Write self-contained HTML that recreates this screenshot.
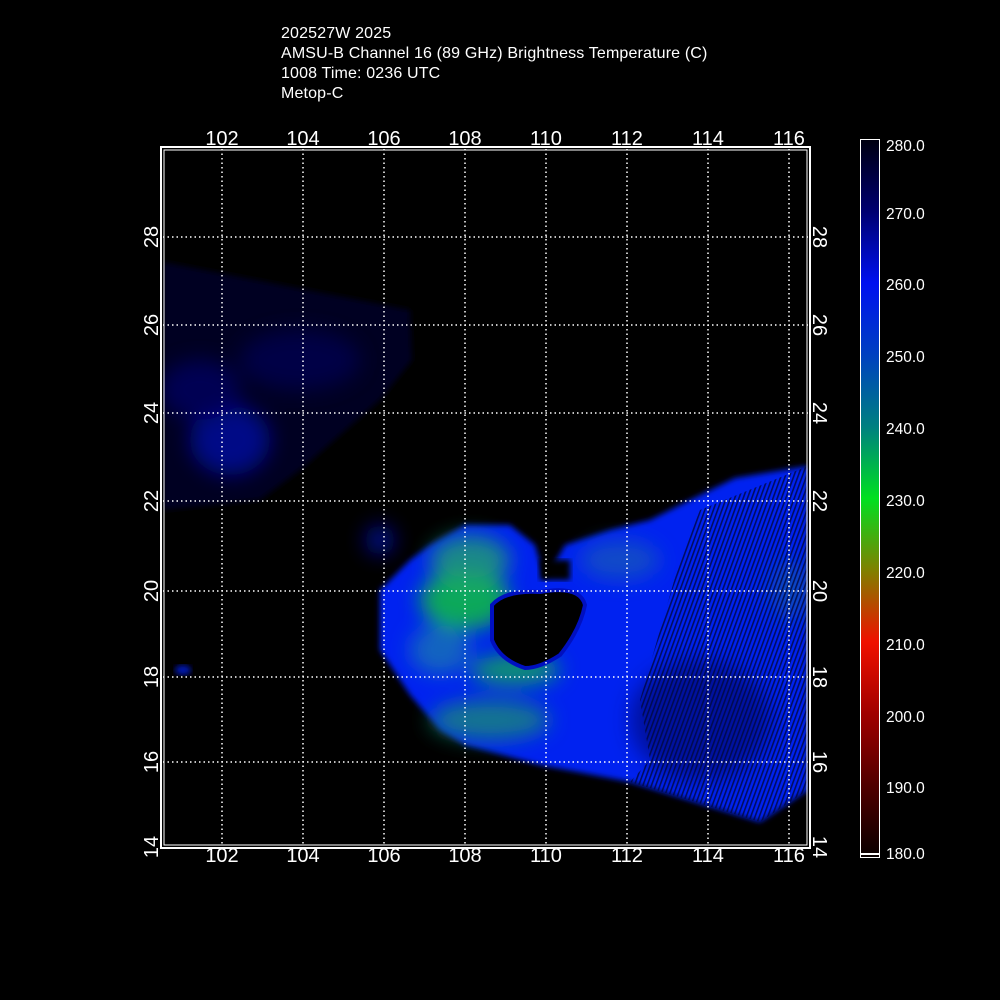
<!DOCTYPE html>
<html><head><style>
body{margin:0;background:#000;width:1000px;height:1000px;overflow:hidden;font-family:"Liberation Sans",sans-serif;color:#fff}
.t{position:absolute;left:281px;font-size:16px;line-height:20px;letter-spacing:0.15px}
</style></head><body>
<div class="t" style="top:24px">202527W 2025<br>AMSU-B Channel 16 (89 GHz) Brightness Temperature (C)<br>1008 Time: 0236 UTC<br>Metop-C</div>
<svg width="1000" height="1000" style="position:absolute;left:0;top:0">
<defs>
<filter id="b" x="-20%" y="-20%" width="140%" height="140%"><feGaussianBlur stdDeviation="10"/></filter>
<filter id="b2"><feGaussianBlur stdDeviation="3"/></filter>
<clipPath id="pc"><rect x="163" y="149" width="645" height="697"/></clipPath>
<linearGradient id="cb" x1="0" y1="0" x2="0" y2="1">
<stop offset="0" stop-color="#000010"/>
<stop offset="0.1" stop-color="#000070"/>
<stop offset="0.2" stop-color="#0010f0"/>
<stop offset="0.3" stop-color="#0040c0"/>
<stop offset="0.4" stop-color="#008080"/>
<stop offset="0.5" stop-color="#00e020"/>
<stop offset="0.6" stop-color="#808000"/>
<stop offset="0.7" stop-color="#f01000"/>
<stop offset="0.8" stop-color="#a00000"/>
<stop offset="0.9" stop-color="#500000"/>
<stop offset="1" stop-color="#080000"/>
</linearGradient>
<pattern id="st" width="4" height="4" patternUnits="userSpaceOnUse" patternTransform="rotate(20)"><rect width="1.6" height="4" fill="#000840"/></pattern>
</defs>
<g clip-path="url(#pc)">
<polygon points="163,262 410,310 412,360 380,400 300,470 260,500 163,510" fill="#000020" filter="url(#b2)"/>
<g filter="url(#b)" opacity="0.8">
<ellipse cx="230" cy="440" rx="40" ry="35" fill="#0010a0"/>
<ellipse cx="200" cy="390" rx="40" ry="30" fill="#000660"/>
<ellipse cx="300" cy="360" rx="60" ry="30" fill="#000450"/>
<ellipse cx="380" cy="540" rx="15" ry="15" fill="#0010a0"/>
</g>
<ellipse cx="183" cy="670" rx="8" ry="5" fill="#0016b0" filter="url(#b2)"/>
<polygon points="380,590 410,560 430,545 465,525 510,525 535,545 545,580 565,545 610,530 650,520 690,500 735,478 808,466 808,790 760,822 630,782 540,765 465,745 440,730 410,695 380,650" fill="#0420f0" filter="url(#b2)"/>
<g filter="url(#b)">
<ellipse cx="465" cy="600" rx="45" ry="30" fill="#10c040" opacity="0.85"/>
<ellipse cx="470" cy="560" rx="40" ry="25" fill="#20a070" opacity="0.8"/>
<ellipse cx="515" cy="670" rx="45" ry="15" fill="#10b050" opacity="0.8"/>
<ellipse cx="490" cy="720" rx="60" ry="20" fill="#1a9070" opacity="0.75"/>
<ellipse cx="620" cy="560" rx="40" ry="20" fill="#2070a0" opacity="0.5"/>
<ellipse cx="440" cy="650" rx="30" ry="25" fill="#2090a0" opacity="0.6"/>
<ellipse cx="700" cy="720" rx="70" ry="60" fill="#000850" opacity="0.5"/>
<ellipse cx="790" cy="590" rx="20" ry="30" fill="#1060a0" opacity="0.6"/>
</g>
<polygon points="650,760 640,700 680,560 700,510 808,466 808,790 760,822 630,782" fill="url(#st)" opacity="0.8"/>
<path d="M492,605 Q505,590 540,592 Q580,585 585,605 Q580,630 560,655 Q540,668 525,668 Q500,660 492,640 Z" fill="#000" stroke="#0010c0" stroke-width="4"/>
<rect x="540" y="560" width="30" height="20" fill="#000" filter="url(#b2)"/>
</g>
<g stroke="#fff" stroke-width="1.5" stroke-dasharray="1.5,3" fill="none">
<path d="M222,149V846M303,149V846M384,149V846M465,149V846M546,149V846M627,149V846M708,149V846M789,149V846"/>
<path d="M163,237H808M163,325H808M163,413H808M163,501H808M163,591H808M163,677H808M163,762H808"/>
</g>
<rect x="161" y="147" width="649" height="701" fill="none" stroke="#fff" stroke-width="2"/>
<rect x="164" y="150" width="643" height="695" fill="none" stroke="#fff" stroke-width="1"/>
<g fill="#fff" font-size="20" text-anchor="middle">
<text x="222" y="145">102</text><text x="303" y="145">104</text><text x="384" y="145">106</text><text x="465" y="145">108</text><text x="546" y="145">110</text><text x="627" y="145">112</text><text x="708" y="145">114</text><text x="789" y="145">116</text>
<text x="222" y="862">102</text><text x="303" y="862">104</text><text x="384" y="862">106</text><text x="465" y="862">108</text><text x="546" y="862">110</text><text x="627" y="862">112</text><text x="708" y="862">114</text><text x="789" y="862">116</text>
<g transform="translate(158,0)">
<text transform="translate(0,237) rotate(-90)">28</text><text transform="translate(0,325) rotate(-90)">26</text><text transform="translate(0,413) rotate(-90)">24</text><text transform="translate(0,501) rotate(-90)">22</text><text transform="translate(0,591) rotate(-90)">20</text><text transform="translate(0,677) rotate(-90)">18</text><text transform="translate(0,762) rotate(-90)">16</text><text transform="translate(0,847) rotate(-90)">14</text>
</g>
<g transform="translate(813,0)">
<text transform="translate(0,237) rotate(90)">28</text><text transform="translate(0,325) rotate(90)">26</text><text transform="translate(0,413) rotate(90)">24</text><text transform="translate(0,501) rotate(90)">22</text><text transform="translate(0,591) rotate(90)">20</text><text transform="translate(0,677) rotate(90)">18</text><text transform="translate(0,762) rotate(90)">16</text><text transform="translate(0,847) rotate(90)">14</text>
</g>
</g>
<rect x="860.5" y="139.5" width="19" height="718" fill="url(#cb)" stroke="#fff"/>
<rect x="861" y="853" width="18" height="2" fill="#fff"/>
<g fill="#fff" font-size="15.5">
<text x="886" y="151">280.0</text><text x="886" y="219">270.0</text><text x="886" y="290">260.0</text><text x="886" y="362">250.0</text><text x="886" y="434">240.0</text><text x="886" y="506">230.0</text><text x="886" y="578">220.0</text><text x="886" y="650">210.0</text><text x="886" y="722">200.0</text><text x="886" y="793">190.0</text><text x="886" y="859">180.0</text>
</g>
</svg>
</body></html>
